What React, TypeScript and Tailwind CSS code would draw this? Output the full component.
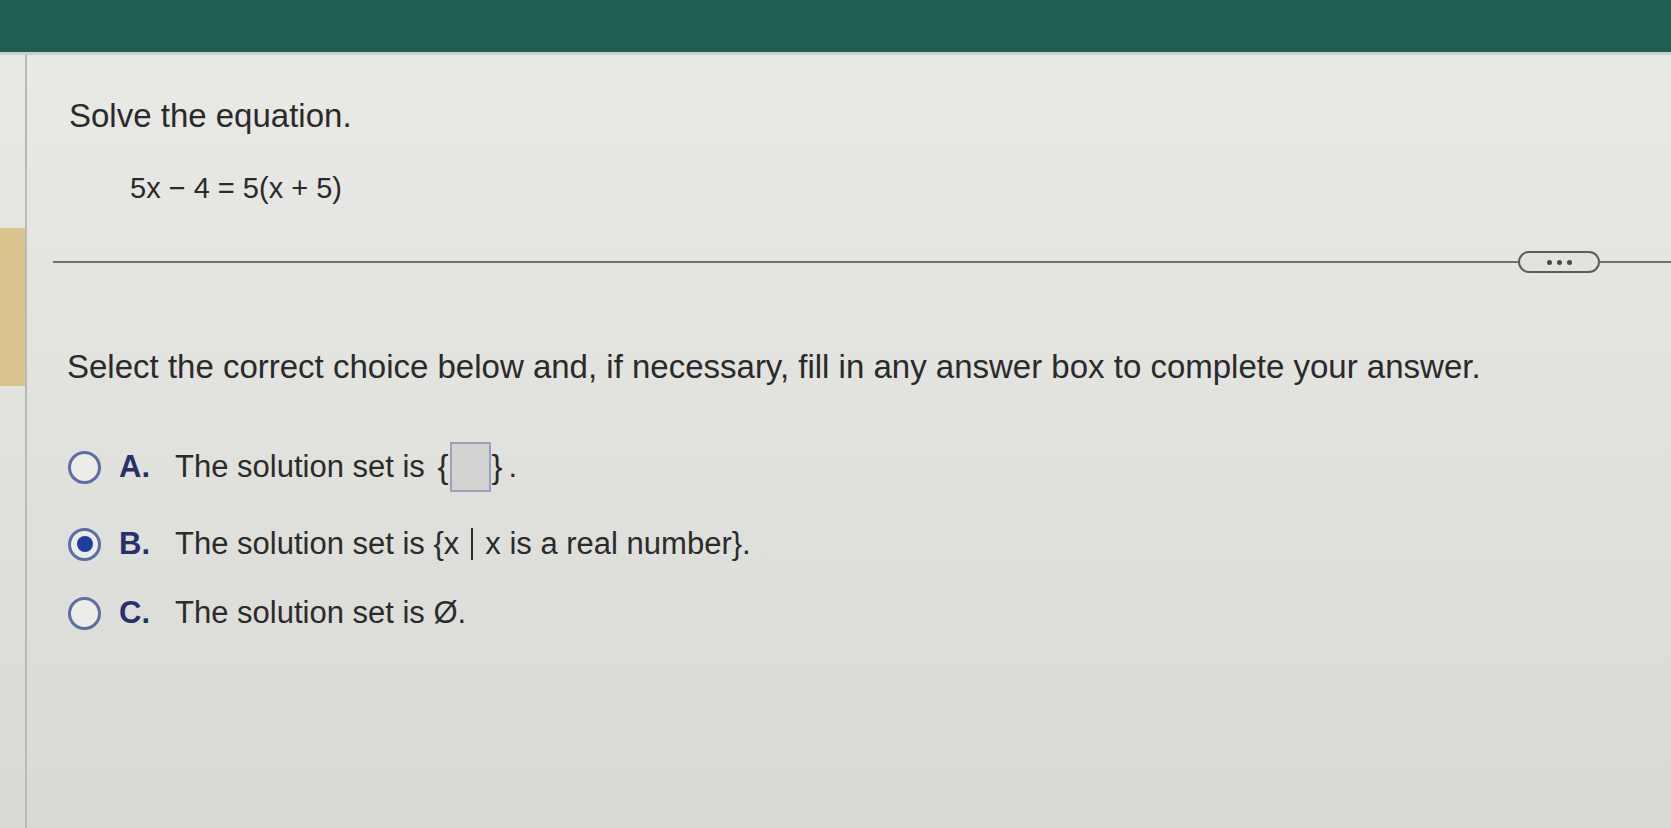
import React from 'react';

const font = { fontFamily: '"Liberation Sans", Arial, sans-serif' };

const Radio = ({ checked = false }: { checked?: boolean }) => (
    <div className="w-[33px] h-[33px] rounded-full border-[3px] border-[#5d6ea6] bg-[#ecece9] flex items-center justify-center shrink-0">
        {checked && <div className="w-[16px] h-[16px] rounded-full bg-[#1f3d9c]" />}
    </div>
);

const Choice = ({ letter, checked, className = '', children }: { letter: string; checked?: boolean; className?: string; children: React.ReactNode }) => (
    <div className={`flex items-center h-[40px] ${className}`}>
        <Radio checked={checked} />
        <span className="ml-[18px] w-[56px] font-bold text-[#28306a]">{letter}.</span>
        <span className="text-[#2b2b2b] flex items-center">{children}</span>
    </div>
);

export default function App() {
    return (
        <div className="w-[1671px] h-[828px] overflow-hidden flex flex-col bg-[#dcdcd9]" style={font}>
            {/* top app bar */}
            <div className="h-[55px] shrink-0 bg-[#1f5f51] border-b-[3px] border-[#c9cfcc]" />

            <div className="flex-1 flex bg-gradient-to-b from-[#e9e9e6] to-[#d9d9d6]">
                {/* left rail */}
                <div className="w-[27px] shrink-0 flex flex-col border-r-2 border-[#b9b9b6]">
                    <div className="h-[173px]" />
                    <div className="h-[158px] bg-[#dac58f]" />
                </div>

                <div className="flex-1 flex flex-col">
                    <div className="pl-[42px] pt-[44px]">
                        <div className="text-[33px] text-[#2a2a2a] leading-none">Solve the equation.</div>
                        <div className="mt-[42px] ml-[61px] text-[29px] text-[#2a2a2a] leading-none">
                            5x − 4 = 5(x + 5)
                        </div>
                    </div>

                    {/* divider with more button */}
                    <div className="mt-[48px] ml-[26px] h-[22px] flex items-center">
                        <div className="flex-1 h-[2px] bg-[#6f6f6f]" />
                        <div className="w-[82px] h-[22px] rounded-full border-2 border-[#5c5c5c] bg-[#e2e2df] flex items-center justify-center gap-[5px]">
                            <span className="w-[5px] h-[5px] rounded-full bg-[#4a4a4a]" />
                            <span className="w-[5px] h-[5px] rounded-full bg-[#4a4a4a]" />
                            <span className="w-[5px] h-[5px] rounded-full bg-[#4a4a4a]" />
                        </div>
                        <div className="w-[71px] h-[2px] bg-[#6f6f6f]" />
                    </div>

                    <div className="pl-[40px] mt-[77px] text-[33px] text-[#2a2a2a] leading-none whitespace-nowrap">
                        Select the correct choice below and, if necessary, fill in any answer box to complete your answer.
                    </div>

                    <div className="pl-[41px] mt-[64px] flex flex-col text-[31px]">
                        <Choice letter="A">
                            The solution set is&nbsp;
                            <span className="text-[33px] ml-[4px]">{'{'}</span>
                            <span className="inline-block w-[41px] h-[50px] bg-[#d3d3d1] border-2 border-[#9ba1bd] mx-[1px]" />
                            <span className="text-[33px]">{'}'}</span>
                            <span className="ml-[6px]">.</span>
                        </Choice>
                        <Choice letter="B" checked className="mt-[37px]">
                            The solution set is {'{'}x
                            <span className="inline-block w-[2px] h-[32px] bg-[#2b2b2b] mx-[12px]" />
                            x is a real number{'}'}.
                        </Choice>
                        <Choice letter="C" className="mt-[29px]">The solution set is Ø.</Choice>
                    </div>
                </div>
            </div>
        </div>
    );
}
